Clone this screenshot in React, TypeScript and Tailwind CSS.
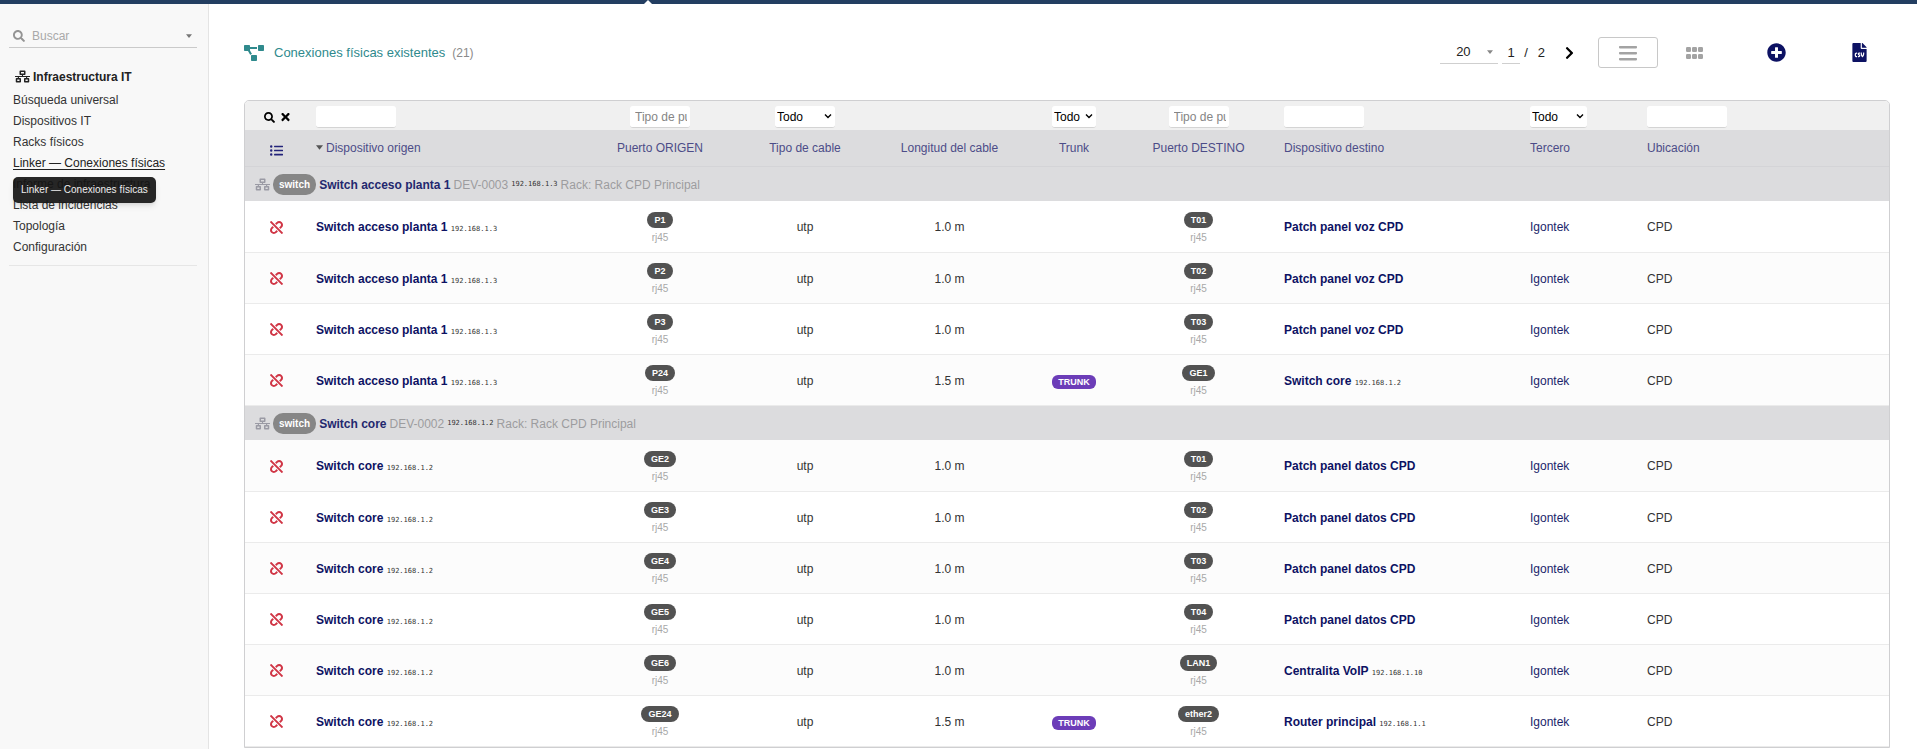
import React, { Fragment, ReactNode } from "react";
import {
  FaChevronRight,
  FaFileCsv,
  FaListUl,
  FaNetworkWired,
  FaPlusCircle,
  FaProjectDiagram,
  FaSearch,
  FaTimes,
  FaUnlink,
} from "react-icons/fa";

type Connection = {
  device: string;
  ip: string;
  port: string;
  length: string;
  trunk?: boolean;
  targetPort: string;
  target: string;
  targetIp?: string;
};

type Group = {
  name: string;
  code: string;
  ip: string;
  rack: string;
  connections: Connection[];
};

const acceso = { device: "Switch acceso planta 1", ip: "192.168.1.3" };
const core = { device: "Switch core", ip: "192.168.1.2" };

const groups: Group[] = [
  {
    name: "Switch acceso planta 1",
    code: "DEV-0003",
    ip: "192.168.1.3",
    rack: "Rack CPD Principal",
    connections: [
      { ...acceso, port: "P1", length: "1.0 m", targetPort: "T01", target: "Patch panel voz CPD" },
      { ...acceso, port: "P2", length: "1.0 m", targetPort: "T02", target: "Patch panel voz CPD" },
      { ...acceso, port: "P3", length: "1.0 m", targetPort: "T03", target: "Patch panel voz CPD" },
      { ...acceso, port: "P24", length: "1.5 m", trunk: true, targetPort: "GE1", target: "Switch core", targetIp: "192.168.1.2" },
    ],
  },
  {
    name: "Switch core",
    code: "DEV-0002",
    ip: "192.168.1.2",
    rack: "Rack CPD Principal",
    connections: [
      { ...core, port: "GE2", length: "1.0 m", targetPort: "T01", target: "Patch panel datos CPD" },
      { ...core, port: "GE3", length: "1.0 m", targetPort: "T02", target: "Patch panel datos CPD" },
      { ...core, port: "GE4", length: "1.0 m", targetPort: "T03", target: "Patch panel datos CPD" },
      { ...core, port: "GE5", length: "1.0 m", targetPort: "T04", target: "Patch panel datos CPD" },
      { ...core, port: "GE6", length: "1.0 m", targetPort: "LAN1", target: "Centralita VoIP", targetIp: "192.168.1.10" },
      { ...core, port: "GE24", length: "1.5 m", trunk: true, targetPort: "ether2", target: "Router principal", targetIp: "192.168.1.1" },
    ],
  },
];

const menu = [
  "Búsqueda universal",
  "Dispositivos IT",
  "Racks físicos",
  "Linker — Conexiones físicas",
  "Informe de infraestructura",
  "Lista de incidencias",
  "Topología",
  "Configuración",
];

const Caret = ({ className }: { className: string }) => (
  <svg viewBox="0 0 8 5" className={className} fill="currentColor" aria-hidden="true">
    <path d="M0 0h8L4 5z" />
  </svg>
);

const Ip = ({ children }: { children: ReactNode }) => (
  <span className="font-['DejaVu_Sans_Mono',monospace] text-[7px] font-normal text-[#333]">
    {children}
  </span>
);

const Port = ({ name }: { name: string }) => (
  <div className="flex flex-col items-center gap-0.5 pt-0.5">
    <span className="h-4 rounded-full bg-[#525252] px-[7px] text-[9px] leading-4 font-bold text-white">
      {name}
    </span>
    <span className="text-[10px] leading-[15px] text-[#a8a8a8]">rj45</span>
  </div>
);

const FilterInput = ({ label, placeholder, className }: { label: string; placeholder?: string; className: string }) => (
  <input
    type="text"
    aria-label={label}
    placeholder={placeholder}
    className={`block h-[22px] rounded-[3px] border-b border-[#d4d4d4] bg-white pr-[3px] pl-[5px] placeholder:text-[#858585] ${className}`}
  />
);

const FilterSelect = ({ label, className }: { label: string; className: string }) => (
  <div className={`grid h-[22px] items-center rounded-[3px] border-b border-[#d4d4d4] bg-white text-black ${className}`}>
    <select aria-label={label} className="col-start-1 row-start-1 w-full appearance-none pl-0.5">
      <option>Todo</option>
    </select>
    <svg
      viewBox="0 0 8 5"
      className="pointer-events-none col-start-1 row-start-1 mr-[3px] h-[5px] w-2 justify-self-end"
      fill="none"
      stroke="currentColor"
      strokeWidth="1.4"
      aria-hidden="true"
    >
      <path d="M1 .6l3 3 3-3" />
    </svg>
  </div>
);

const Sidebar = () => (
  <aside className="w-[209px] shrink-0 border-r border-[#e4e4e4] bg-[#f8f8f8] pr-[11px] pl-[9px]">
    <div className="mt-5 flex h-6 items-center gap-[7px] border-b border-[#cacaca] pr-[5px] pl-1">
      <FaSearch className="size-3 shrink-0 text-[#949494]" />
      <input
        type="text"
        aria-label="Buscar"
        placeholder="Buscar"
        className="min-w-0 flex-1 bg-transparent placeholder:text-[#a9a9a9]"
      />
      <Caret className="h-1 w-[6px] text-[#777]" />
    </div>
    <nav className="border-b border-[#e6e6e6] pt-[17px] pb-[7px] pl-1">
      <h2 className="mb-0.5 flex h-[23px] items-center gap-[3px] pl-0.5 font-bold text-[#222]">
        <FaNetworkWired className="size-[15px]" />
        Infraestructura IT
      </h2>
      <ul>
        {menu.map((item) => (
          <li key={item} className="relative leading-[21px]">
            <a
              href="#"
              className={
                item.startsWith("Linker")
                  ? "text-[#222] underline underline-offset-2"
                  : "text-[#333]"
              }
            >
              {item}
            </a>
            {item.startsWith("Linker") && (
              <div
                role="tooltip"
                className="absolute top-6 left-0 z-10 rounded-[5px] bg-[#141414]/92 px-2 text-[10px] leading-[26px] whitespace-nowrap text-[#eee] shadow-md"
              >
                {item}
              </div>
            )}
          </li>
        ))}
      </ul>
    </nav>
  </aside>
);

const Toolbar = () => (
  <div className="flex h-[31px] items-center justify-between">
    <h1 className="flex items-center text-[13px] text-[#2f8a8d]">
      <FaProjectDiagram className="mr-[10px] size-5" />
      Conexiones físicas existentes
      <span className="ml-[7px] text-xs text-[#8a8a8a]">(21)</span>
    </h1>
    <div className="flex items-center text-[13px] text-[#222]">
      <div className="mr-1 flex h-[22px] w-[58px] items-center border-b border-[#cfcfcf] pr-[5px]">
        <select aria-label="Filas por página" className="flex-1 appearance-none pl-4">
          <option>20</option>
        </select>
        <Caret className="h-1 w-[6px] text-[#888]" />
      </div>
      <input
        type="text"
        aria-label="Página"
        defaultValue="1"
        className="h-[22px] w-[18px] border-b border-[#cfcfcf] text-center"
      />
      <span className="ml-1">/</span>
      <span className="ml-[10px]">2</span>
      <button type="button" aria-label="Página siguiente" className="ml-5 text-black">
        <FaChevronRight className="h-[14px] w-[9px]" />
      </button>
      <button
        type="button"
        aria-label="Vista de lista"
        className="ml-6 flex h-[31px] w-[60px] items-center justify-center rounded-[3px] border border-[#c8c8c8] text-[#a3a3a3]"
      >
        <svg viewBox="0 0 18 16" className="h-4 w-[18px]" fill="currentColor">
          <rect x="0" y="1" width="18" height="2.4" rx="0.8" />
          <rect x="0" y="7" width="18" height="2.4" rx="0.8" />
          <rect x="0" y="13" width="18" height="2.4" rx="0.8" />
        </svg>
      </button>
      <button type="button" aria-label="Vista de cuadrícula" className="ml-7 text-[#a3a3a3]">
        <svg viewBox="0 0 17 12" className="h-3 w-[17px]" fill="currentColor">
          {[0, 6, 12].map((x) => (
            <g key={x}>
              <rect x={x} y="0" width="5" height="5" rx="1.2" />
              <rect x={x} y="7" width="5" height="5" rx="1.2" />
            </g>
          ))}
        </svg>
      </button>
      <button type="button" aria-label="Añadir" className="ml-16 text-[#0d1263]">
        <FaPlusCircle className="size-[19px]" />
      </button>
      <button type="button" aria-label="Exportar CSV" className="mr-[21px] ml-16 text-[#0d1263]">
        <FaFileCsv className="size-[19px]" />
      </button>
    </div>
  </div>
);

const ConnectionsTable = () => (
  <div className="overflow-hidden rounded-t-[5px] border border-[#cfcfd1]">
    <table className="w-full table-fixed">
      <colgroup>
        <col className="w-[63px]" />
        <col className="w-[274px]" />
        <col className="w-[156px]" />
        <col className="w-[134px]" />
        <col className="w-[155px]" />
        <col className="w-[94px]" />
        <col className="w-[155px]" />
        <col className="w-[246px]" />
        <col className="w-[117px]" />
        <col />
      </colgroup>
      <thead>
        <tr className="h-[29px] bg-[#f0f0f0] *:pt-[3px]">
          <td>
            <div className="flex items-center justify-center gap-1.5 text-black">
              <button type="button" aria-label="Filtrar">
                <FaSearch className="size-[11px]" />
              </button>
              <button type="button" aria-label="Quitar filtros">
                <FaTimes className="h-3 w-[9px]" />
              </button>
            </div>
          </td>
          <td className="px-2"><FilterInput label="Dispositivo origen" className="w-20" /></td>
          <td><FilterInput label="Puerto origen" placeholder="Tipo de puerto" className="mx-auto w-[60px]" /></td>
          <td><FilterSelect label="Tipo de cable" className="mx-auto w-[60px]" /></td>
          <td />
          <td><FilterSelect label="Trunk" className="mx-auto w-11" /></td>
          <td><FilterInput label="Puerto destino" placeholder="Tipo de puerto" className="mx-auto w-[60px]" /></td>
          <td className="px-2"><FilterInput label="Dispositivo destino" className="w-20" /></td>
          <td className="px-2"><FilterSelect label="Tercero" className="w-[57px]" /></td>
          <td className="px-2"><FilterInput label="Ubicación" className="w-20" /></td>
        </tr>
        <tr className="h-9 border-b border-[#d4d4d7] bg-[#dcdcde] text-[#4c4c88] *:font-normal">
          <th>
            <button type="button" aria-label="Columnas" className="block pt-1.5 pl-[25px] text-[#23237a]">
              <FaListUl className="size-[13px]" />
            </button>
          </th>
          <th className="px-2 text-left">
            <span className="flex items-center gap-[3px]">
              <Caret className="h-[5px] w-[7px] text-[#555]" />
              Dispositivo origen
            </span>
          </th>
          <th>Puerto ORIGEN</th>
          <th>Tipo de cable</th>
          <th>Longitud del cable</th>
          <th>Trunk</th>
          <th>Puerto DESTINO</th>
          <th className="px-2 text-left">Dispositivo destino</th>
          <th className="px-2 text-left">Tercero</th>
          <th className="px-2 text-left">Ubicación</th>
        </tr>
      </thead>
      <tbody>
        {groups.map((group) => (
          <Fragment key={group.code}>
            <tr className="h-[35px] bg-[#dcdcde]">
              <td colSpan={10} className="pl-2.5">
                <div className="flex items-center gap-[3px] pt-0.5 text-[#9c9c9f]">
                  <FaNetworkWired className="size-[15px] text-[#9a9aa4]" />
                  <span className="rounded-[10px] bg-[#868686] px-1.5 text-[10px] leading-[21px] font-bold text-white">
                    switch
                  </span>
                  <a href="#" className="font-bold text-[#23286e]">{group.name}</a>
                  <span>{group.code}</span>
                  <Ip>{group.ip}</Ip>
                  <span>Rack: {group.rack}</span>
                </div>
              </td>
            </tr>
            {group.connections.map((row) => (
              <tr
                key={row.port}
                className="h-[51px] border-b border-[#ebebeb] text-center text-[#333] odd:bg-[#fcfcfc] *:pt-0.5"
              >
                <td>
                  <button type="button" aria-label="Desconectar" className="block pl-[25px] text-[#d03545]">
                    <FaUnlink className="size-[13px]" />
                  </button>
                </td>
                <td className="px-2 text-left">
                  <a href="#" className="font-bold text-[#0d1263]">{row.device}</a> <Ip>{row.ip}</Ip>
                </td>
                <td><Port name={row.port} /></td>
                <td>utp</td>
                <td>{row.length}</td>
                <td>
                  {row.trunk && (
                    <span className="inline-block rounded-md bg-[#6c3db8] px-1.5 text-[9px] leading-[14px] font-bold text-white">
                      TRUNK
                    </span>
                  )}
                </td>
                <td><Port name={row.targetPort} /></td>
                <td className="px-2 text-left">
                  <a href="#" className="font-bold text-[#0d1263]">{row.target}</a>{" "}
                  {row.targetIp && <Ip>{row.targetIp}</Ip>}
                </td>
                <td className="px-2 text-left">
                  <a href="#" className="text-[#1a1f6b]">Igontek</a>
                </td>
                <td className="px-2 text-left">CPD</td>
              </tr>
            ))}
          </Fragment>
        ))}
      </tbody>
    </table>
  </div>
);

export default function App() {
  return (
    <div className="flex min-h-screen flex-col bg-white font-['Liberation_Sans',Arial,sans-serif] text-xs text-[#333]">
      <header className="relative h-1 bg-[#233e61]">
        <svg viewBox="0 0 8 4" className="absolute bottom-0 left-[644px] h-1 w-2 text-white" fill="currentColor">
          <path d="M0 4L4 0l4 4z" />
        </svg>
      </header>
      <div className="flex flex-1">
        <Sidebar />
        <main className="min-w-0 flex-1 pt-[33px] pr-[27px] pl-[35px]">
          <Toolbar />
          <div className="pt-8">
            <ConnectionsTable />
          </div>
        </main>
      </div>
    </div>
  );
}
